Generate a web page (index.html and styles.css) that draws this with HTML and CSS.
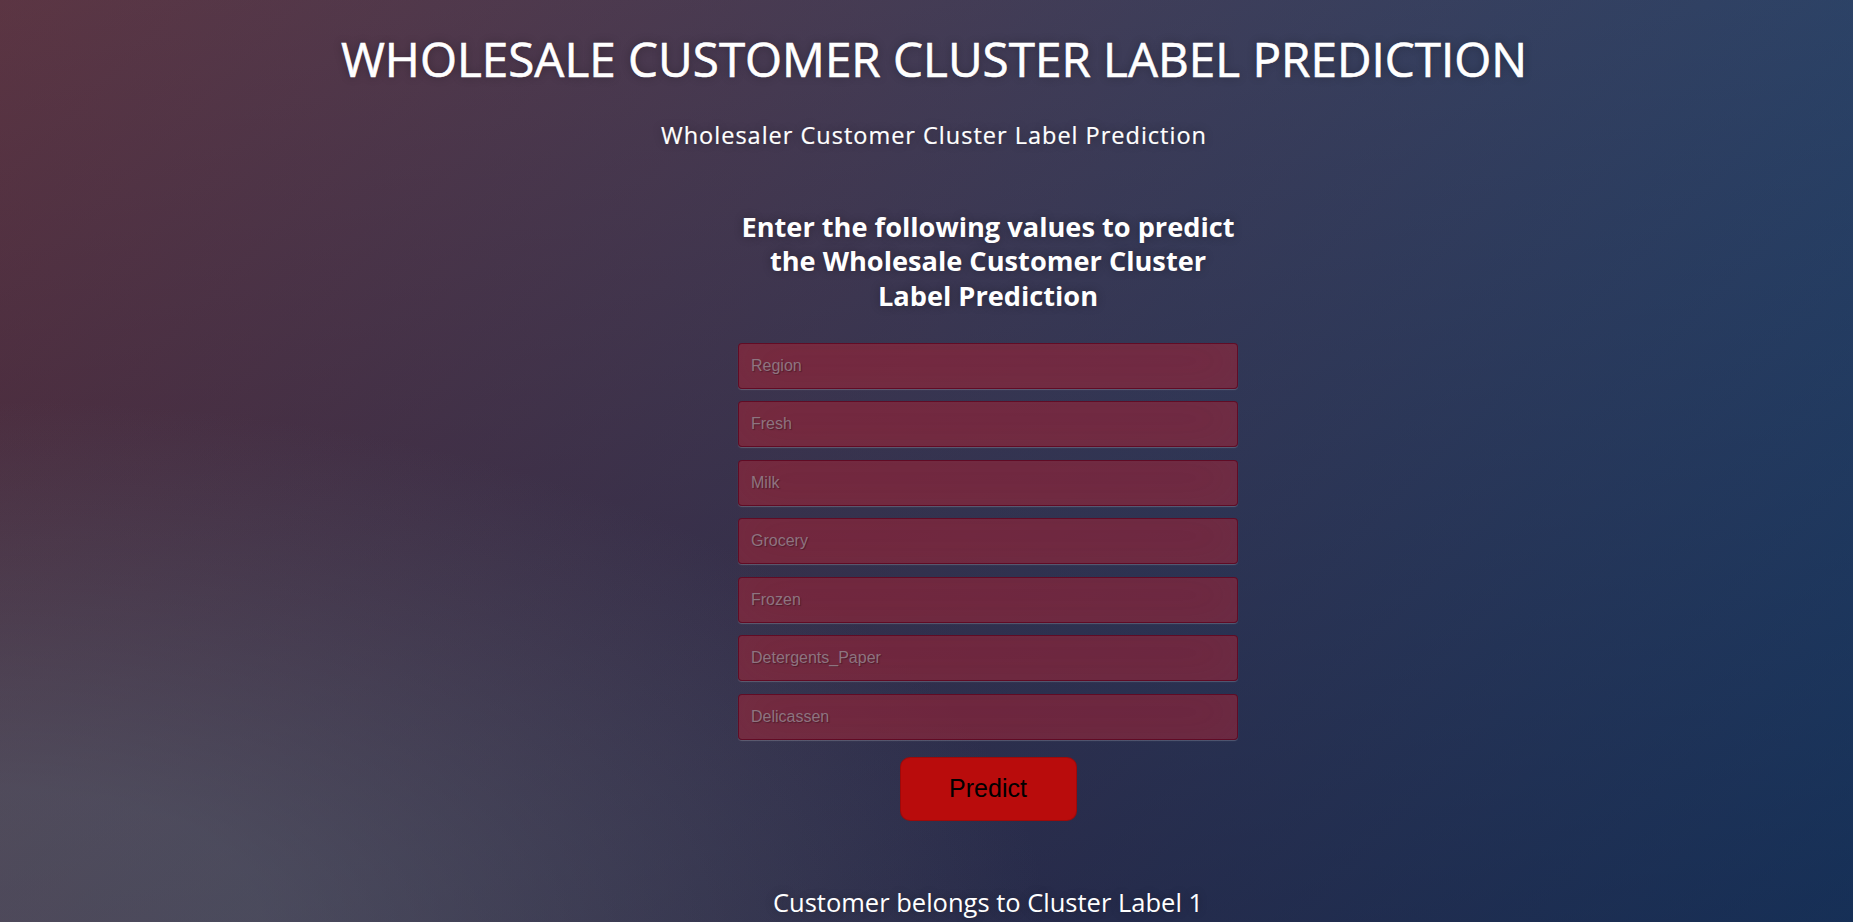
FILE: index.html
```html
<!DOCTYPE html>
<html lang="en">
<head>
<meta charset="utf-8">
<title>Wholesale Customer Cluster Label Prediction</title>
<link rel="stylesheet" href="styles.css">
</head>
<body>
  <header class="header">
    <h1 class="page-title">WHOLESALE CUSTOMER CLUSTER LABEL PREDICTION</h1>
    <p class="page-subtitle">Wholesaler Customer Cluster Label Prediction</p>
  </header>
  <div class="login">
    <h2 class="form-title">Enter the following values to predict the Wholesale Customer Cluster Label Prediction</h2>
    <form class="form">
      <input class="field" type="text" name="Region" placeholder="Region">
      <input class="field" type="text" name="Fresh" placeholder="Fresh">
      <input class="field" type="text" name="Milk" placeholder="Milk">
      <input class="field" type="text" name="Grocery" placeholder="Grocery">
      <input class="field" type="text" name="Frozen" placeholder="Frozen">
      <input class="field" type="text" name="Detergents_Paper" placeholder="Detergents_Paper">
      <input class="field" type="text" name="Delicassen" placeholder="Delicassen">
      <button class="btn" type="button">Predict</button>
    </form>
    <p class="result">Customer belongs to Cluster Label 1</p>
  </div>
</body>
</html>
```
FILE: styles.css
```css
html {
  height: 100%;
}
body {
  margin: 0;
  min-height: 100%;
  overflow: hidden;
  font-family: "Open Sans", "Noto Sans", sans-serif;
  color: #fff;
  text-align: center;
  background-color: #092756;
  background-image:
    radial-gradient(ellipse farthest-corner at 0% 100%, rgba(104,128,138,.4) 10%, rgba(138,114,76,0) 40%),
    linear-gradient(to bottom, rgba(57,173,219,.25) 0%, rgba(42,60,87,.4) 100%),
    linear-gradient(135deg, #670d10 0%, #092756 100%);
}
.header {
  padding-left: 15px;
}
.page-title {
  margin: 26px 0 0;
  font-size: 47.6px;
  line-height: 66px;
  font-weight: 400;
  letter-spacing: 0;
  -webkit-text-stroke: 0.6px #fff;
  text-shadow: 0 0 10px rgba(0,0,0,0.3);
}
.page-subtitle {
  margin: 28px 0 0;
  font-size: 23.5px;
  line-height: 30px;
  letter-spacing: 1px;
  -webkit-text-stroke: 0.2px #fff;
  text-shadow: 0 0 10px rgba(0,0,0,0.3);
}
.login {
  width: 500px;
  margin: 59.5px 0 0 calc(50% - 188.5px);
}
.form-title {
  margin: 0;
  font-size: 27.2px;
  line-height: 34.5px;
  font-weight: 700;
  letter-spacing: 0;
  text-shadow: 0 0 10px rgba(0,0,0,0.3);
}
.form {
  margin-top: 29.5px;
  display: flex;
  flex-direction: column;
  align-items: center;
  gap: 12.5px;
}
.field {
  box-sizing: border-box;
  width: 100%;
  height: 46px;
  margin: 0;
  padding: 0 12px;
  font-family: "Liberation Sans", Arial, sans-serif;
  font-size: 16px;
  color: #fff;
  background: rgba(178,28,48,0.5);
  border: 1px solid rgba(90,0,25,0.7);
  border-radius: 4px;
  outline: none;
  text-shadow: 1px 1px 1px rgba(0,0,0,0.3);
  box-shadow: inset 0 -5px 45px rgba(100,100,100,0.12), 0 1px 1px rgba(255,255,255,0.2);
}
.field::placeholder {
  color: #8e7480;
  opacity: 1;
}
.btn {
  box-sizing: border-box;
  width: 177px;
  height: 64px;
  margin-top: 4.5px;
  font-family: "Liberation Sans", Arial, sans-serif;
  font-size: 25px;
  color: #000;
  background: #b90c0c;
  border: 1px solid rgba(0,0,0,0.15);
  border-radius: 10px;
  cursor: pointer;
}
.result {
  margin: 64px 0 0;
  font-size: 25.5px;
  line-height: 34px;
  letter-spacing: 0;
  text-shadow: 0 0 10px rgba(0,0,0,0.3);
}
```
